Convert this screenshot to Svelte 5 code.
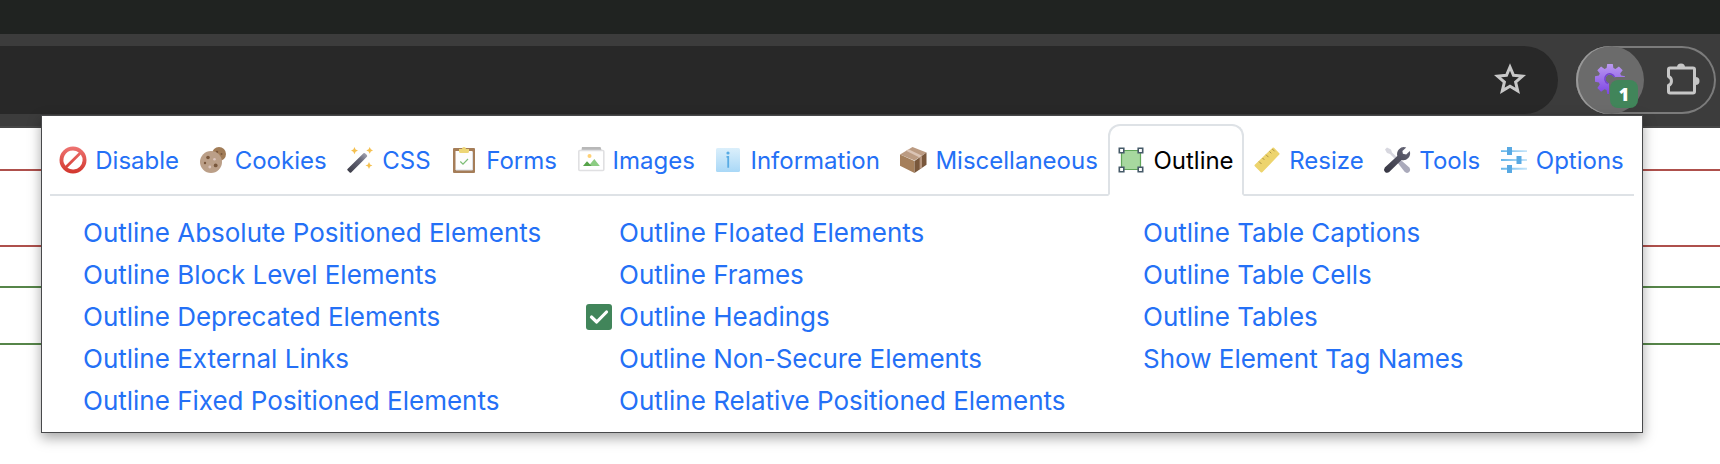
<script>
  const tabs = ['Disable', 'Cookies', 'CSS', 'Forms', 'Images', 'Information', 'Miscellaneous', 'Outline', 'Resize', 'Tools', 'Options'];
  const columns = [
    ['Outline Absolute Positioned Elements', 'Outline Block Level Elements', 'Outline Deprecated Elements', 'Outline External Links', 'Outline Fixed Positioned Elements'],
    ['Outline Floated Elements', 'Outline Frames', 'Outline Headings', 'Outline Non-Secure Elements', 'Outline Relative Positioned Elements'],
    ['Outline Table Captions', 'Outline Table Cells', 'Outline Tables', 'Show Element Tag Names']
  ];
  let active = $state('Outline');
  let enabled = $state(['Outline Headings']);

  function toggle(event, name) {
    event.preventDefault();
    enabled = enabled.includes(name) ? enabled.filter((n) => n !== name) : [...enabled, name];
  }
</script>

{#snippet icon(name)}
  <svg class="icon" viewBox="0 0 26 26" aria-hidden="true">
    {#if name === 'Disable'}
      <defs><linearGradient id="no" x1="0" y1="0" x2="0" y2="1"><stop offset="0" stop-color="#ee7472" /><stop offset="1" stop-color="#d2352c" /></linearGradient></defs>
      <path fill="url(#no)" fill-rule="evenodd" d="M13-.5a13.500 13.500 0 1 0 0 27a13.500 13.500 0 1 0 0-27ZM13 3.400a9.600 9.600 0 0 1 5.800 2L5.400 18.800A9.600 9.600 0 0 1 13 3.400ZM20.800 7.400A9.600 9.600 0 0 1 7.400 20.800Z" />
    {:else if name === 'Cookies'}
      <circle cx="19" cy="7" r="7" fill="#a17c57" />
      <circle cx="21.5" cy="7" r="1" fill="#79573c" /><circle cx="17" cy="5" r="1.2" fill="#79573c" /><circle cx="20" cy="11" r="1" fill="#b99a7f" />
      <circle cx="11" cy="15" r="11" fill="#bb9f88" />
      <circle cx="8" cy="10.5" r="1.8" fill="#79573c" /><circle cx="5" cy="16" r="1.2" fill="#79573c" /><circle cx="15.7" cy="18.4" r="1.9" fill="#79573c" />
      <circle cx="14.5" cy="12.3" r="1.3" fill="#dcc5bd" /><circle cx="9.8" cy="20" r="1.4" fill="#dcc5bd" />
    {:else if name === 'CSS'}
      <defs><linearGradient id="wand" x1="1" y1="0" x2="0" y2="1"><stop offset="0" stop-color="#acacb9" /><stop offset=".35" stop-color="#676879" /><stop offset="1" stop-color="#393944" /></linearGradient></defs>
      <path fill="url(#wand)" d="M.5 22 16.5 6.3q1-.7 1.8.1l1.6 1.7q.7.9 0 1.7L4.2 25.4q-.8.7-1.5 0l-2.2-2.1q-.6-.6 0-1.3Z" />
      <g fill="#f5c04f"><path d="m7.5 0 1.1 2.5L11 3.6 8.6 4.7 7.5 7.2 6.3 4.7 4 3.6l2.3-1.1ZM22.7 0l1.1 2.3L26 3.4l-2.2 1.1-1.1 2.3-1.1-2.3-2.3-1.1 2.3-1.1ZM22 15l1.1 2.4 2.3 1.1-2.3 1.1L22 22l-1.1-2.4-2.4-1.1 2.4-1.1Z" /></g>
    {:else if name === 'Forms'}
      <rect x="2" y="1" width="22" height="25" rx="1" fill="#a57d58" />
      <path fill="#fdfdfd" d="M4.5 4h17v19h-17z" />
      <path fill="none" stroke="#d9dce1" d="M5 23h16.5V5" />
      <path fill="#edd676" d="M8 2h3a2 2 0 0 1 4 0h3v2.5q0 1.5-1.5 1.5h-7Q8 6 8 4.500Z" />
      <path fill="none" stroke="#7cbd75" stroke-width="1.2" d="m9.300 14.500 2.700 2.700 5-5.200" />
    {:else if name === 'Images'}
      <path fill="#b8b8b8" d="M4 0h18.500l1 3h-20z" />
      <rect x=".8" y="3.500" width="25" height="20" rx="1" fill="#fff" stroke="#e0e0e2" stroke-width="1.600" />
      <circle cx="11.500" cy="9" r="2" fill="#ffd176" />
      <path fill="#8ccc83" d="m10.500 19 5.800-7 5.500 7z" /><path fill="#55a348" d="m5 19 4-4.800 4.500 4.800z" />
    {:else if name === 'Information'}
      <defs><linearGradient id="info" x1="0" y1="0" x2="0" y2="1"><stop offset="0" stop-color="#dbeffb" /><stop offset="1" stop-color="#a9d8f7" /></linearGradient></defs>
      <rect x="1" y="1" width="24" height="24" rx="1.500" fill="url(#info)" />
      <circle cx="13" cy="6" r="1.600" fill="#58abe4" /><path fill="none" stroke="#58abe4" stroke-width="1.800" d="M11.500 9.800h1.700v11" />
    {:else if name === 'Miscellaneous'}
      <path fill="#bb9b82" d="M0 7.500 12.500 0 26.500 5.500 14.500 13.500Z" />
      <path fill="#a57f5b" d="M0 7.500 14.500 14v12L0 18.800z" /><path fill="#79573b" d="m14.500 14 12-8.500v12.200L14.500 26z" />
      <path fill="#dbc4b5" d="m6 3.800 2.500-1.500 13.500 6.400-2.400 1.700z" /><path fill="#b6967e" d="m19.600 10.400 2.400-1.700v12l-2.400 1.600z" />
    {:else if name === 'Outline'}
      <path fill="#a7d89f" stroke="#61a65a" stroke-width="1.200" d="M3.500 3.500h19v19h-19z" />
      <g fill="#fff" stroke="#465a69" stroke-width="1.600"><path d="M1.300 1.300h4.500v4.500H1.300zM20.200 1.300h4.500v4.500h-4.500zM1.300 20.200h4.500v4.500H1.300zM20.200 20.200h4.500v4.500h-4.500z" /></g>
    {:else if name === 'Resize'}
      <path fill="#edd46d" d="m.8 17.800 17.800-17q.7-.6 1.400 0l5.300 5.500q.6.700 0 1.300l-17 17.600q-.8.800-1.500 0L.8 19.200q-.7-.7 0-1.400Z" />
      <path stroke="#ad9344" stroke-width="1" d="m5 14.500 2.500 2.500M8.500 11l1.800 1.800M12 7.700l2.500 2.500M15.500 4.500l1.800 1.800M18.300 2l2.300 2.300" />
    {:else if name === 'Tools'}
      <defs><linearGradient id="wrench" x1="1" y1="0" x2="0" y2="1"><stop offset="0" stop-color="#686879" /><stop offset="1" stop-color="#353541" /></linearGradient></defs>
      <path fill="#d7d7df" d="m1 2.500 2-2 4 2 1 3L15 12l-2 2-7-7-3-1Z" />
      <path fill="#aaaabb" d="m13 15 3-2.800 9 8q2.200 2.500.1 4.800-2.300 2-4.500-.2Z" />
      <path fill="url(#wrench)" d="M22.300.6q-4-1.600-7.300 1.600-2.700 3-1.700 6.800L.8 20.600q-1.600 2.200.2 4.300 2 1.800 4.200.2L17.500 13q4 1 6.800-2 2.700-2.800 1.500-7l-3.600 3.600-3.300-.8-.5-2.700Z" />
    {:else}
      <defs><linearGradient id="slider"><stop offset="0" stop-color="#63b5e9" /><stop offset="1" stop-color="#c5e5fa" /></linearGradient></defs>
      <g fill="url(#slider)"><path d="M0 3.200h26v1.900H0zM0 12h26v1.900H0zM0 20.800h26v1.900H0z" /></g>
      <g fill="#58a9e3"><path d="M6 0h5v8H6zM15.500 9h5v8h-5zM6 18h5v8H6z" /></g>
    {/if}
  </svg>
{/snippet}

<div class="browser">
  <div class="tabstrip"></div>
  <header class="toolbar">
    <div class="address">
      <button class="plain" aria-label="Bookmark this page">
        <svg width="32" height="32" viewBox="0 0 32 32"><path fill="none" stroke="#c7c7c7" stroke-width="3" d="m16 4 3.500 8.300 9 .8-6.900 5.900 2.100 8.900-7.700-4.700-7.700 4.700 2.100-8.900-6.900-5.900 9-.8Z" /></svg>
      </button>
    </div>
    <div class="extensions">
      <button class="plain gear" aria-label="Web Developer">
        <svg width="32" height="32" viewBox="-16 -16 32 32">
          <defs><linearGradient id="purple" gradientUnits="userSpaceOnUse" x1="0" y1="-15" x2="0" y2="15"><stop offset="0" stop-color="#bb9af0" /><stop offset="1" stop-color="#7d45e4" /></linearGradient></defs>
          <path fill="url(#purple)" fill-rule="evenodd" d="M-2.800-15h5.600l.6 4.100 2.100.9 3.400-2.500 3.800 3.700L10.200-5.500l.9 2.100 3.900.6v5.600l-3.900.6-.9 2.100 2.500 3.400-3.800 3.800L5.500 10.200l-2.100.9-.6 3.900h-5.600l-.6-3.900-2.100-.9-3.400 2.500-3.800-3.800 2.500-3.400-.9-2.100-3.900-.6v-5.600l3.900-.6.9-2.100-2.500-3.300 3.800-3.700 3.400 2.500 2.100-.9ZM0-4.500a4.500 4.500 0 1 0 0 9a4.500 4.500 0 1 0 0-9Z" />
          <path fill="none" stroke="#7443cf" stroke-width="1.500" d="M-2 4.500A5 5 0 1 1 4.500-2" />
          <path fill="#6b6b6b" d="M-1 16V5Q-1-2 6-2h10v18Z" />
        </svg>
        <span class="badge">1</span>
      </button>
      <button class="plain puzzle" aria-label="Extensions">
        <svg width="34" height="34" viewBox="0 0 34 34"><path fill="#c7c7c7" d="M11 5.500a4 4 0 0 1 8 0ZM29.500 15a4 4 0 0 1 0 8Z" /><path fill="none" stroke="#c7c7c7" stroke-width="3" stroke-linejoin="round" d="M4 6h23q1.500 0 1.500 1.500v22q0 1.500-1.500 1.500H4q-1.500 0-1.500-1.500V23.500a4.900 4.900 0 0 0 0-9V7.500Q2.500 6 4 6Z" /></svg>
      </button>
    </div>
  </header>

  <main class="page">
    <div class="outline heading"></div>
    <div class="outline block"></div>
  </main>

  <section class="popup">
    <div class="tabs" role="tablist">
      {#each tabs as tab}
        <button class="tab" class:active={active === tab} role="tab" aria-selected={active === tab} onclick={() => (active = tab)}>
          {@render icon(tab)}<span class="label">{tab}</span>
        </button>
      {/each}
    </div>
    <div class="menu" role="tabpanel">
      {#each columns as column}
        <ul>
          {#each column as item}
            <li>
              <a href="#outline" onclick={(e) => toggle(e, item)}>
                <span class="slot">
                  {#if enabled.includes(item)}
                    <svg class="icon" viewBox="0 0 26 26" aria-label="Enabled"><rect width="26" height="26" rx="3" fill="#41855a" /><path fill="none" stroke="#fff" stroke-width="3.200" stroke-linecap="round" stroke-linejoin="round" d="m5.500 13 5.200 5L20.500 8" /></svg>
                  {/if}
                </span>
                {item}
              </a>
            </li>
          {/each}
        </ul>
      {/each}
    </div>
  </section>
</div>

<style>
  :global(body) { background: #fff; }
  .browser {
    position: relative;
    min-height: 100vh;
    overflow: hidden;
    font-family: Inter, 'Liberation Sans', sans-serif;
  }
  .tabstrip { height: 34px; background: #202321; }
  .toolbar {
    display: flex;
    gap: 18px;
    padding: 12px 4px 12px 0;
    background: #3c3c3c;
    border-bottom: 2px solid #474747;
  }
  .address {
    flex: 1;
    display: flex;
    align-items: center;
    justify-content: flex-end;
    height: 68px;
    padding-right: 32px;
    box-sizing: border-box;
    border-radius: 0 34px 34px 0;
    background: #282828;
  }
  .extensions {
    display: flex;
    align-items: center;
    gap: 22px;
    height: 68px;
    padding-right: 16px;
    box-sizing: border-box;
    border-radius: 34px;
    box-shadow: inset 0 0 0 2px #7b7b7b;
  }
  .plain { display: flex; padding: 0; border: 0; background: none; cursor: pointer; }
  .plain svg { position: relative; bottom: 1px; }
  .gear {
    position: relative;
    align-items: center;
    justify-content: center;
    width: 68px;
    height: 68px;
    border-radius: 50%;
    background: #6b6b6b;
    box-shadow: inset 2px 0 0 #999;
  }
  .badge {
    position: absolute;
    right: 6px;
    bottom: 6px;
    width: 28px;
    height: 28px;
    border-radius: 8px;
    background: #41855a;
    color: #fff;
    font: 800 18px/28px 'Open Sans', sans-serif;
    text-align: center;
  }
  .page { padding-top: 41px; }
  .outline { border-top: 2px solid #ae504c; border-bottom: 2px solid #ae504c; }
  .heading { height: 74px; }
  .block { height: 55px; margin-top: 39px; border-color: #568549; }
  .popup {
    position: absolute;
    top: 115px;
    left: 41px;
    right: 77px;
    padding: 8px 8px 10px;
    box-sizing: border-box;
    border: 1px solid #48494b;
    background: #fff;
    box-shadow: 0 5px 12px rgb(0 0 0 / 35%);
  }
  .tabs { display: flex; box-shadow: inset 0 -2px #dee2e6; }
  .tab {
    flex: 1 1 auto;
    display: flex;
    align-items: center;
    justify-content: center;
    gap: 9px;
    height: 72px;
    padding: 0 8px;
    border: 2px solid transparent;
    border-radius: 12px 12px 0 0;
    background: none;
    color: #2470f6;
    font: 24px/36px Inter, 'Liberation Sans', sans-serif;
    white-space: nowrap;
    cursor: pointer;
  }
  .tab.active {
    border-color: #dee2e6 #dee2e6 #fff;
    background: #fff;
    color: #000;
  }
  .label { padding-top: 2px; }
  .icon { flex: none; display: block; width: 26px; height: 26px; overflow: visible; }
  .menu { display: grid; grid-template-columns: 536fr 524fr 524fr; padding-top: 16px; }
  ul { margin: 0; padding: 0; list-style: none; }
  a {
    display: flex;
    align-items: center;
    color: #2470f6;
    font-size: 26px;
    line-height: 42px;
    text-decoration: none;
    white-space: nowrap;
  }
  .slot { flex: none; width: 33px; }
</style>
